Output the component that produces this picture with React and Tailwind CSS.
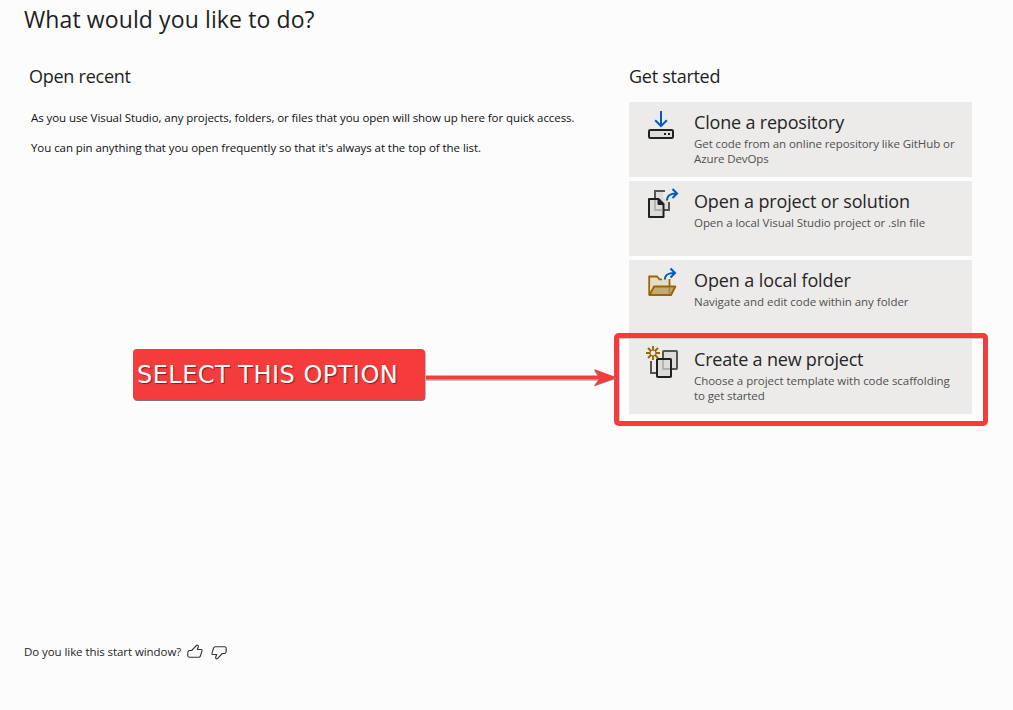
const CloneIcon = () => (
  <svg viewBox="0 0 36 36" className="h-9 w-9" fill="none">
    <path d="M16 5v14.5M10.2 14.3l5.8 5.8 5.8-5.8" stroke="#005dba" strokeWidth="2" />
    <rect x="4" y="24" width="24" height="8" rx="1.3" fill="#dcdcdb" stroke="#212121" strokeWidth="2" />
    <path d="M19 27h2v2h-2zM23 27h2v2h-2z" fill="#212121" />
  </svg>
);

const ProjectIcon = () => (
  <svg viewBox="0 0 36 36" className="h-9 w-9" fill="none">
    <path d="M10 6h8v6l6 5v8H10z" fill="#dcdcdb" />
    <path d="M10 14V6h10M24 17v8H19" stroke="#555" strokeWidth="2" />
    <path d="M4 14h9.500l5 5v13H4z" fill="#dcdcdb" stroke="#212121" strokeWidth="2" strokeLinejoin="round" />
    <path d="M10 15v10h7.500" stroke="#b0b0b0" strokeWidth="1.800" />
    <path d="M13 14v5.500h5.500z" fill="#212121" stroke="#212121" />
    <path d="M22 15.500c0-5 3-7 9.500-7M27.500 4l4.500 4.500-4.500 4.500" stroke="#005dba" strokeWidth="2.100" />
  </svg>
);

const FolderIcon = () => (
  <svg viewBox="0 0 36 36" className="h-9 w-9" fill="none">
    <path d="M4.200 12.500H12l2.500 2.800h10V23H4.200z" fill="#e4dccc" />
    <path d="M9 22.500H30.500l-4.500 8.500H4z" fill="#c4aa75" />
    <path d="M4.200 31V12.500H12l2.500 2.800H17M24.500 15v7" stroke="#966900" strokeWidth="1.800" />
    <path d="M24.500 23v7" stroke="#a8884a" strokeWidth="1.800" />
    <path d="M9 22.500H30.300l-4.300 8.500H4.500z" stroke="#966900" strokeWidth="2" strokeLinejoin="round" />
    <path d="M19.800 15.500c0-5 3-6.500 9.700-6.500M25.500 4.500L30 9l-4.500 4.500" stroke="#005dba" strokeWidth="2.100" />
  </svg>
);

const CreateIcon = () => (
  <svg viewBox="0 0 36 36" className="h-9 w-9" fill="none">
    <path d="M6 18v12H11" stroke="#555" strokeWidth="2" />
    <rect x="18" y="8" width="14" height="18" rx="0.700" fill="#dcdcdb" stroke="#555" strokeWidth="2" />
    <rect x="12" y="16" width="14" height="18" rx="0.700" fill="#dcdcdb" stroke="#212121" strokeWidth="2" />
    <path d="M18 17v9H25" stroke="#b0b0b0" strokeWidth="1.800" />
    <circle cx="8" cy="10" r="3" stroke="#966900" strokeWidth="1.100" />
    <path d="M8 3v4M8 13v4M1 10h4M11 10h4M3 5l3 3M10 12l3 3M13 5l-3 3M6 12l-3 3" stroke="#966900" strokeWidth="1.900" />
  </svg>
);

const Thumb = ({ className }) => (
  <svg viewBox="0 0 16 16" className={className} fill="none" stroke="#333" strokeWidth="1.100" strokeLinejoin="round">
    <path d="M.8 8.300L2 6.500h2.700L9.300 1.700Q10 .7 11 1.500q.600.600.300 1.500L10.300 5.500H14q1.300 0 1.100 1.200l-1.700 5.300Q13 13.300 11.700 13.300H2.500Q.8 13.300.8 11.800z" />
  </svg>
);

const cards = [
  {
    Icon: CloneIcon,
    title: "Clone a repository",
    tracking: "tracking-[-0.180px]",
    lines: [["Get code from an online repository like GitHub or", "tracking-[-0.080px]"], ["Azure DevOps", "tracking-[-0.100px]"]],
  },
  {
    Icon: ProjectIcon,
    title: "Open a project or solution",
    tracking: "tracking-[-0.150px]",
    lines: [["Open a local Visual Studio project or .sln file", "tracking-[-0.065px]"]],
  },
  {
    Icon: FolderIcon,
    title: "Open a local folder",
    tracking: "tracking-[-0.100px]",
    lines: [["Navigate and edit code within any folder", "tracking-[-0.030px]"]],
  },
  {
    Icon: CreateIcon,
    title: "Create a new project",
    tracking: "tracking-[-0.200px]",
    lines: [["Choose a project template with code scaffolding", "tracking-[-0.030px]"], ["to get started", "tracking-[-0.100px]"]],
  },
];

function Card({ Icon, title, tracking, lines }) {
  return (
    <button className="flex h-[75px] w-full items-start bg-[#ecebea] pl-4 pt-1 text-left">
      <Icon />
      <span className="flex flex-col whitespace-nowrap pl-[13px]">
        <span className={`h-[30px] text-[18px] leading-[32px] text-[#262626] ${tracking}`}>{title}</span>
        {lines.map(([text, cls]) => (
          <span key={text} className={`h-[15px] text-[11.500px] leading-[15px] text-[#505050] ${cls}`}>{text}</span>
        ))}
      </span>
    </button>
  );
}

export default function App() {
  return (
    <div className="relative flex h-[710px] w-[1013px] flex-col overflow-hidden bg-[#fcfcfc] font-['Open_Sans','Noto_Sans',sans-serif] text-[#1e1e1e]">
      <h1 className="h-[60px] whitespace-nowrap pl-6 text-[23px] leading-[38px] tracking-[0.110px]">What would you like to do?</h1>
      <main className="flex h-[576px]">
        <section className="w-[629px] whitespace-nowrap pl-[29px]">
          <h2 className="h-[42px] text-[18px] leading-[32px] tracking-[-0.250px]">Open recent</h2>
          <div className="flex flex-col pl-[2px] text-[11.500px] text-[#101010]">
            <p className="h-[30px] leading-[32px] tracking-[-0.075px]">As you use Visual Studio, any projects, folders, or files that you open will show up here for quick access.</p>
            <p className="h-[30px] leading-[32px] tracking-[-0.065px]">You can pin anything that you open frequently so that it's always at the top of the list.</p>
          </div>
        </section>
        <section className="w-[343px]">
          <h2 className="h-[42px] text-[18px] leading-[32px] tracking-[-0.270px]">Get started</h2>
          <div className="flex flex-col gap-1">
            {cards.map((c) => <Card key={c.title} {...c} />)}
          </div>
        </section>
      </main>
      <footer className="flex h-[31px] items-center whitespace-nowrap pl-6 text-[11.500px]">
        <span className="w-[163px] tracking-[-0.070px]">Do you like this start window?</span>
        <Thumb className="h-4 w-4" />
        <Thumb className="ml-2 h-4 w-4 rotate-180" />
      </footer>

      <div className="absolute left-[133px] top-[349px] flex h-[51px] w-[292px] items-center rounded-[4px] bg-[#f43c3c] pl-1 font-['DejaVu_Sans',sans-serif] text-[24px] tracking-[0.480px] text-white shadow-[0.500px_1px_0.500px_#777]">
        <span className="whitespace-nowrap [text-shadow:1px_1px_1px_#802020]">SELECT THIS OPTION</span>
      </div>
      <div className="absolute left-[614px] top-[333px] h-[93px] w-[374px] rounded-[5px] border-[5px] border-[#f43c3c] shadow-[inset_0.500px_0.500px_0.500px_#999,0_0_0.500px_#888]" />
      <svg className="absolute left-[425px] top-[366px]" width="196" height="24" viewBox="0 0 196 24">
        <path d="M1 14h172" stroke="#888" />
        <path d="M169 4l23 8.500-23 8 5-8z" fill="#888" />
        <path d="M1 9.500h173L169 3l23 8.500-23 8.300 5-6.300H1z" fill="#f43c3c" />
      </svg>
    </div>
  );
}
